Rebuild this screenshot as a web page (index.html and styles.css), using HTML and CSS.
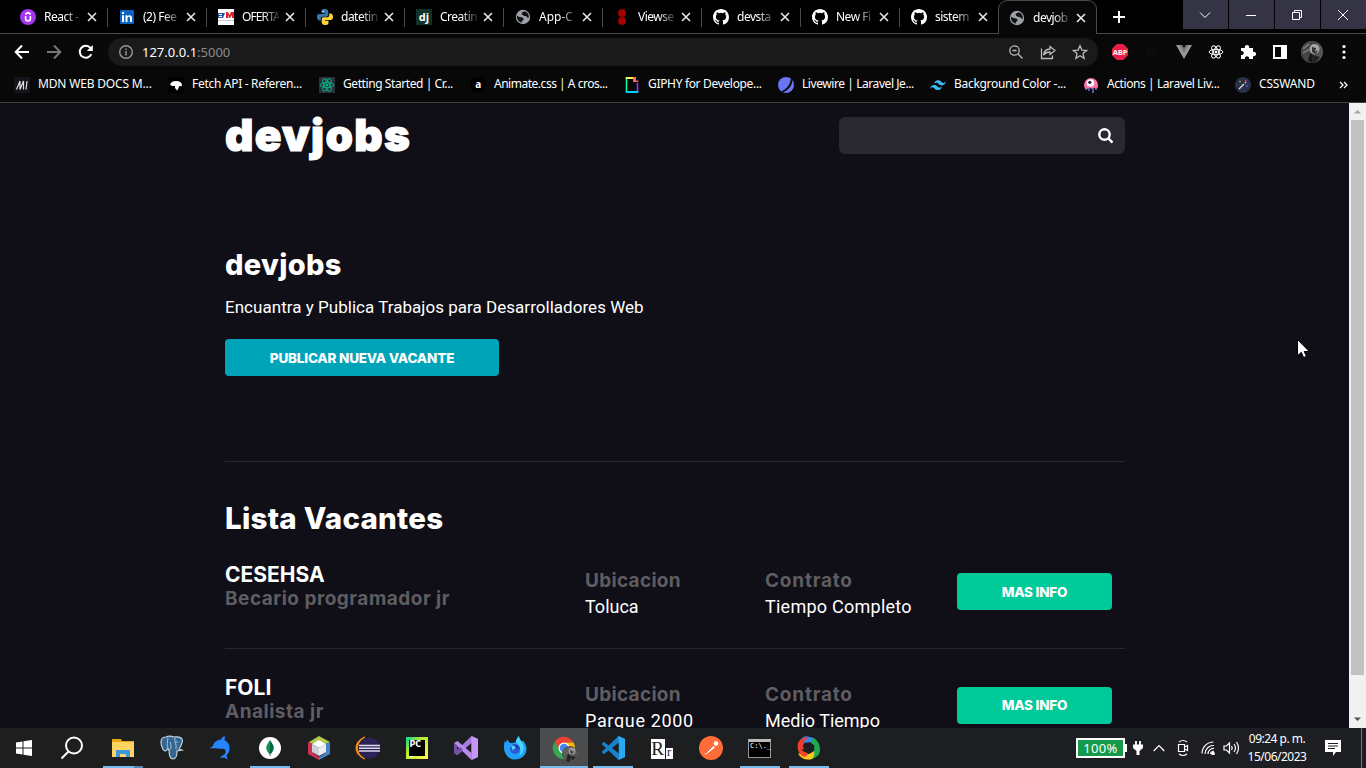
FILE: index.html
```html
<!DOCTYPE html>
<html lang="es">
<head>
<meta charset="utf-8">
<title>devjobs</title>
<link rel="stylesheet" href="styles.css">
</head>
<body>
<svg class="defs" width="0" height="0" aria-hidden="true">
  <symbol id="x" viewBox="0 0 10 10"><path d="M1 1l8 8M9 1L1 9" stroke="#e8e8e8" stroke-width="1.6" fill="none"/></symbol>
  <symbol id="github" viewBox="0 0 16 16"><path fill="#fff" d="M8 0C3.58 0 0 3.58 0 8c0 3.54 2.29 6.53 5.47 7.59.4.07.55-.17.55-.38 0-.19-.01-.82-.01-1.49-2.01.37-2.53-.49-2.69-.94-.09-.23-.48-.94-.82-1.13-.28-.15-.68-.52-.01-.53.63-.01 1.08.58 1.23.82.72 1.21 1.87.87 2.33.66.07-.52.28-.87.51-1.07-1.78-.2-3.64-.89-3.64-3.95 0-.87.31-1.59.82-2.15-.08-.2-.36-1.02.08-2.12 0 0 .67-.21 2.2.82a7.6 7.6 0 0 1 4 0c1.53-1.04 2.2-.82 2.2-.82.44 1.1.16 1.92.08 2.12.51.56.82 1.27.82 2.15 0 3.07-1.87 3.75-3.65 3.95.29.25.54.73.54 1.48 0 1.07-.01 1.93-.01 2.2 0 .21.15.46.55.38A8 8 0 0 0 16 8c0-4.42-3.58-8-8-8z"/></symbol>
  <symbol id="globe" viewBox="0 0 16 16"><circle cx="8" cy="8" r="7.200" fill="#9aa0a6"/><path d="M9.500 2.200L6.800 3.800v1.700L9.300 7h1.900l.8 1.500 1.800.2c.4-3-1.300-5.700-4.300-6.500zM2 6.800c-.5 3 1.400 6 4.800 7v-1.600l2-2-1.300-1.800L4.500 8z" fill="#101010"/></symbol>
  <symbol id="react" viewBox="0 0 16 16"><g fill="none" stroke="currentColor" stroke-width="1"><ellipse cx="8" cy="8" rx="6.800" ry="2.700"/><ellipse cx="8" cy="8" rx="6.800" ry="2.700" transform="rotate(60 8 8)"/><ellipse cx="8" cy="8" rx="6.800" ry="2.700" transform="rotate(120 8 8)"/></g><circle cx="8" cy="8" r="1.400" fill="currentColor"/></symbol>
</svg>

<div class="screen">
  <header class="tabs">
    <div class="tab"><svg class="fav" viewBox="0 0 16 16"><circle cx="8" cy="8" r="8" fill="#a435f0"/><path d="M5.600 7v2.600a2.400 2.400 0 0 0 4.800 0V7M5.300 5.200L8 3.500l2.700 1.700" fill="none" stroke="#fff" stroke-width="1.600"/></svg><span>React -</span><svg class="cl"><use href="#x"/></svg></div>
    <div class="tab"><svg class="fav" viewBox="0 0 16 16"><rect x="1" y="1" width="14" height="14" rx="1" fill="#0a66c2"/><path d="M3 6.300h2V13H3zM3 3h2v2H3zM6.500 6.300h2v1c1-1.800 4.500-1.500 4.500 1.500V13h-2V9.300c0-2-2.500-1.800-2.500 0V13h-2z" fill="#fff"/></svg><span>(2) Fee</span><svg class="cl"><use href="#x"/></svg></div>
    <div class="tab"><svg class="fav" viewBox="0 0 16 16"><rect width="16" height="16" fill="#fff"/><path d="M0 4h7l-2 5H0z" fill="#2151a5"/><path d="M1 5h3v1H1zM1 7h3v1H1z" fill="#fff"/><path d="M8 9V3h2l1.500 3L13 3h3v6h-2V6l-2 3h-1L10 6v3z" fill="#dc2531"/><path d="M0 11h16v1H0z" fill="#ccc"/></svg><span class="tight">OFERTA</span><svg class="cl"><use href="#x"/></svg></div>
    <div class="tab"><svg class="fav" viewBox="0 0 16 16"><path d="M8 0C4.500 0 4.500 1 4.500 3v1.200H8v.8H2.500C0 5 0 7 0 8.200s.7 3.300 2.600 3.300h1.200V9.600c0-1 .9-1.900 2-1.900h3.600c1 0 1.900-.9 1.900-1.900V3c0-2-1-3-3.300-3z" fill="#3776ab"/><path d="M8 16c3.500 0 3.500-1 3.500-3v-1.200H8V11h5.500C16 11 16 9 16 7.800s-.7-3.300-2.600-3.300h-1.200v1.900c0 1-.9 1.900-2 1.900H6.600c-1 0-1.900.9-1.900 1.900V13c0 2 1 3 3.300 3z" fill="#ffd43b"/><circle cx="6.300" cy="2.200" r=".8" fill="#fff"/></svg><span>datetin</span><svg class="cl"><use href="#x"/></svg></div>
    <div class="tab"><i class="fav dj">dj</i><span>Creatin</span><svg class="cl"><use href="#x"/></svg></div>
    <div class="tab"><svg class="fav"><use href="#globe"/></svg><span class="loose">App-C</span><svg class="cl"><use href="#x"/></svg></div>
    <div class="tab"><svg class="fav" viewBox="0 0 16 16"><circle cx="8" cy="4" r="4" fill="#a30000"/><circle cx="8" cy="12" r="4" fill="#a30000"/></svg><span>Viewse</span><svg class="cl"><use href="#x"/></svg></div>
    <div class="tab"><svg class="fav"><use href="#github"/></svg><span>devsta</span><svg class="cl"><use href="#x"/></svg></div>
    <div class="tab"><svg class="fav"><use href="#github"/></svg><span>New Fi</span><svg class="cl"><use href="#x"/></svg></div>
    <div class="tab last"><svg class="fav"><use href="#github"/></svg><span>sistem</span><svg class="cl"><use href="#x"/></svg></div>
    <div class="tab active"><svg class="fav"><use href="#globe"/></svg><span>devjob</span><svg class="cl"><use href="#x"/></svg></div>
    <svg class="plus" width="14" height="14" viewBox="0 0 14 14"><path d="M7 1v12M1 7h12" stroke="#fff" stroke-width="2"/></svg>
    <div class="winbtns">
      <b><svg viewBox="0 0 12 12"><path d="M1 3.500l5 5 5-5"/></svg></b>
      <b><svg viewBox="0 0 12 12"><path d="M1 6.500h10"/></svg></b>
      <b><svg viewBox="0 0 12 12"><path d="M1.500 3.500h7v7h-7zM3.500 3.500v-2h7v7h-2"/></svg></b>
      <b><svg viewBox="0 0 12 12"><path d="M1 1l10 10M11 1L1 11"/></svg></b>
    </div>
  </header>

  <div class="toolbar">
    <svg class="nav" viewBox="0 0 16 16"><path d="M15 8H2M8 1.500L1.700 8 8 14.500" stroke="#fff"/></svg>
    <svg class="nav" viewBox="0 0 16 16"><path d="M1 8h13M8 1.500L14.300 8 8 14.500" stroke="#777"/></svg>
    <svg class="nav" viewBox="0 0 16 16"><path d="M13.300 10.200A6 6 0 1 1 12.500 4" stroke="#fff"/><path d="M14.800 1v6H8.800z" fill="#fff" stroke="none"/></svg>
    <div class="omnibox">
      <svg class="info" viewBox="0 0 14 14"><circle cx="7" cy="7" r="6.300"/><path d="M7 6v4.500M7 3.500v1.500"/></svg>
      <div class="url">127.0.0.1<em>:5000</em></div>
      <svg class="oi" viewBox="0 0 16 16"><circle cx="6.500" cy="6.500" r="4.700"/><path d="M10 10l4.500 4.500M4.500 6.500h4"/></svg>
      <svg class="oi" viewBox="0 0 16 16"><path d="M1.500 4.500v10h11v-3M10 2.500l5 4-5 4V8c-3 0-5 1-6.500 3C4 7.500 6 5.300 10 5z"/></svg>
      <svg class="oi" viewBox="0 0 16 16"><path d="M8 1.700l1.900 4.400 4.700.4-3.600 3.100 1.100 4.700L8 11.800l-4.100 2.500L5 9.600 1.400 6.500l4.700-.4z"/></svg>
    </div>
    <div class="ext">
      <i class="abp">ABP</i>
      <i class="ghost">(•)</i>
      <svg viewBox="0 0 16 16"><path d="M0 1h6l2 3.500L10 1h6L8 15z" fill="#999"/><path d="M3.500 1H6l2 3.500L10 1h2.500L8 9z" fill="#777"/></svg>
      <svg class="rx"><use href="#react"/></svg>
      <svg viewBox="0 0 16 16"><path d="M1 4h4a2.200 2.200 0 1 1 4 0h4v4a2.200 2.200 0 1 1 0 4v3H9a2.100 2.100 0 1 0-4 0H1v-4a2.100 2.100 0 1 0 0-4z" fill="#fff"/></svg>
      <svg viewBox="0 0 16 16"><path d="M1 1h14v14H1z" fill="#fff"/><path d="M3 3h6v10H3z" fill="#080808"/></svg>
      <svg class="avatar" viewBox="0 0 22 22"><circle cx="11" cy="11" r="11" fill="#555"/><path d="M0 11A11 11 0 0 1 17 2L9 10l-1 11A11 11 0 0 1 0 11z" fill="#444"/><circle cx="13.500" cy="8" r="5" fill="#a5a5a5"/><path d="M11 6l4 1-1 4 3-2-2 4-4-2z" fill="#333"/><path d="M9 12l-2 8 4 2 1-8z" fill="#181818"/><path d="M12 14l7 2-4 5-4 1z" fill="#222"/><path d="M2 8l6-5M2 12l7-4" stroke="#777" stroke-width="2"/></svg>
      <svg class="dots" viewBox="0 0 4 16"><circle cx="2" cy="2.500" r="1.600"/><circle cx="2" cy="8" r="1.600"/><circle cx="2" cy="13.500" r="1.600"/></svg>
    </div>
  </div>

  <nav class="bookmarks">
    <a><svg viewBox="0 0 16 16"><rect width="16" height="16" fill="#15141a"/><path d="M2.500 12.500L6 4v8.500L9.500 4v8.500M13 4l-1 8.500" stroke="#ddd" stroke-width="1.200" fill="none"/></svg><span class="k1">MDN WEB DOCS M...</span></a>
    <a><svg viewBox="0 0 16 16"><rect width="16" height="16" fill="#000"/><path d="M2 7.500C3 5 5 4 8 4c4 0 6 1.500 6 4.500-1 1-2 1-3 .5 0 2-1 3-2 4.500L7 11V9H4z" fill="#fff"/></svg><span class="k2">Fetch API - Referen...</span></a>
    <a><svg viewBox="0 0 16 16" class="rg"><rect width="16" height="16" fill="#2b2f3b"/><use href="#react"/></svg><span class="k3">Getting Started | Cr...</span></a>
    <a><i class="an">a</i><span class="k4">Animate.css | A cros...</span></a>
    <a><svg viewBox="0 0 16 16"><path d="M2.500 1v14" stroke="#00ff99" stroke-width="1.600"/><path d="M1.700 1H9" stroke="#fff35c" stroke-width="2"/><path d="M13.500 6v9" stroke="#9933ff" stroke-width="1.600"/><path d="M1.700 15h12.600" stroke="#00ccff" stroke-width="2"/><path d="M9 0v5h5.300V3.500H12V0z" fill="#ff6666"/></svg><span class="k5">GIPHY for Develope...</span></a>
    <a><svg viewBox="0 0 16 16"><circle cx="8" cy="8" r="8" fill="#6875f5"/><path d="M3 14.500C9 12 12 8 13 1.500l1.500 1.500C14 9 10 13.500 4.500 15.500z" fill="#080808"/></svg><span class="k6">Livewire | Laravel Je...</span></a>
    <a><svg viewBox="0 0 16 16"><path d="M4 7c.6-2.500 2-3.800 4-3.800 3 0 3.500 2.300 5 2.700 1 .2 2-.2 3-1.300-.6 2.500-2 3.800-4 3.800-3 0-3.500-2.300-5-2.700-1-.2-2 .2-3 1.300zM0 11.700C.6 9.200 2 8 4 8c3 0 3.500 2.200 5 2.600 1 .2 2-.2 3-1.300-.6 2.600-2 3.800-4 3.800-3 0-3.500-2.300-5-2.700-1-.2-2 .2-3 1.300z" fill="#38bdf8"/></svg><span class="k7">Background Color -...</span></a>
    <a><svg viewBox="0 0 16 16"><path d="M3 9v4M6 10v4M10 10v6M13 9v4" stroke="#4e56a6" stroke-width="2"/><path d="M1 8a7 7 0 1 1 14 0c0 3-1 3.500-2 3.500S11 10 10 11s-2 1-3 0-2 1-3 1-3-1-3-4z" fill="#fb70a9"/><circle cx="7.500" cy="6" r="3.800" fill="#fff"/><circle cx="6.800" cy="5.300" r="1.600" fill="#1b1b45"/></svg><span class="k8">Actions | Laravel Liv...</span></a>
    <a><svg viewBox="0 0 16 16"><circle cx="8" cy="8" r="8" fill="#28304a"/><path d="M4 12l5-5" stroke="#ddd" stroke-width="1.200"/><path d="M10 6l1-1" stroke="#ffd65a" stroke-width="1.500"/><circle cx="5" cy="4.500" r=".8" fill="#e2ad43"/><circle cx="12" cy="9" r=".8" fill="#5f80f4"/><circle cx="11" cy="3.500" r=".8" fill="#e44a71"/></svg><span class="k9">CSSWAND</span></a>
    <svg class="more" viewBox="0 0 10 10"><path d="M1 2l3 3-3 3M5 2l3 3-3 3"/></svg>
  </nav>

  <main class="view">
    <div class="page">
      <div class="head">
        <h1>devjobs</h1>
        <div class="search"><svg viewBox="0 0 16 16"><circle cx="6.500" cy="6.500" r="5.200"/><path d="M10 10l4.500 4.700"/></svg></div>
      </div>
      <section class="hero">
        <h2>devjobs</h2>
        <p>Encuantra y Publica Trabajos para Desarrolladores Web</p>
        <a class="btn pub">PUBLICAR NUEVA VACANTE</a>
      </section>
      <section class="list">
        <h2 class="lista">Lista Vacantes</h2>
        <article>
          <div><h3>CESEHSA</h3><h4 class="role">Becario programador jr</h4></div>
          <div class="meta"><h4>Ubicacion</h4><p>Toluca</p></div>
          <div class="meta"><h4 class="co">Contrato</h4><p class="wide">Tiempo Completo</p></div>
          <a class="btn more-info">MAS INFO</a>
        </article>
        <article>
          <div><h3>FOLI</h3><h4 class="role">Analista jr</h4></div>
          <div class="meta"><h4>Ubicacion</h4><p class="wider">Parque 2000</p></div>
          <div class="meta"><h4 class="co">Contrato</h4><p>Medio Tiempo</p></div>
          <a class="btn more-info second">MAS INFO</a>
        </article>
      </section>
    </div>
    <div class="scroll">
      <svg viewBox="0 0 17 17"><path d="M5 10.500h7L8.500 7z" fill="#a3a3a3"/></svg>
      <div class="thumb"></div>
      <svg viewBox="0 0 17 17"><path d="M5 6.500h7L8.500 10z" fill="#505050"/></svg>
    </div>
    <svg class="cursor" width="13" height="20" viewBox="0 0 13 20"><path d="M.5.5v16.200l3.800-3.400 2.300 5.200 2.800-1.200-2.200-4.800h5z" fill="#fff" stroke="#000"/></svg>
  </main>

  <footer class="taskbar">
    <div class="cell sys"><svg viewBox="0 0 24 24"><path d="M4 6.500l6.500-1v6H4zM11.500 5.300L20 4v7.500h-8.500zM4 12.500h6.500v6L4 17.600zM11.500 12.500H20V20l-8.500-1.300z" fill="#fff"/></svg></div>
    <div class="cell sys gap"><svg viewBox="0 0 24 24"><circle cx="14" cy="9.500" r="8" fill="none" stroke="#fff" stroke-width="2"/><path d="M8.500 15.500L1.500 22.500" stroke="#fff" stroke-width="2"/></svg></div>
    <div class="cell open multi"><svg viewBox="0 0 24 24"><path d="M1 3h9l1 2h12v4H1z" fill="#e7a416"/><path d="M1 6h22v15H1z" fill="#ffd461"/><path d="M5 14h14v7h-4v-3H9v3H5z" fill="#3c97dd"/></svg></div>
    <div class="cell"><svg viewBox="0 0 24 24"><path d="M6 1C2 1 1 3 1 6s2 9 4 9 2-2 3-2l1 1c0 5 1 9 4 9s4-2 4-8l5-1-3-1c3-4 4-9 3-10-2-3-6-2-8-2-3-1-6-1-8 0z" fill="#336791" stroke="#c7d5df" stroke-width="1.200"/><path d="M8 2c-1 4-1 8 0 11M15 2c-1 4 2 6 1 11M9 14c3-1 2-5 1-8M16 6h2" fill="none" stroke="#c7d5df" stroke-width=".8"/></svg></div>
    <div class="cell"><svg viewBox="0 0 24 24"><path d="M1 12l3-2C5 6 8 4 12 3.500c1-2 2-3 4-3.500l-.5 4.200C19 6 21 9 20.500 13c0 3-1.500 5-3 6l1 4.500-3.500-2-4 .5c1-2 3-3 4.500-3.500 1.500-2 1.500-4 0-5.500-2-.5-5 0-7-.5-2-.5-5-.5-7.500 0z" fill="#2684ff"/></svg></div>
    <div class="cell open"><svg viewBox="0 0 24 24"><circle cx="12" cy="12" r="11" fill="#fff"/><path d="M12 4c-5 7-5 9 0 15z" fill="#12924f"/><path d="M12 4c5 7 5 9 0 15z" fill="#00684a"/><path d="M12 17v3" stroke="#777"/></svg></div>
    <div class="cell"><svg viewBox="0 0 24 24"><path d="M12 0l11 6-4 2-7-3-7 3-3-2z" fill="#b4c84c"/><path d="M1 6l5 2v9l6 4v3L1 18z" fill="#cf3156"/><path d="M23 6v12l-11 6v-3l6-4V8z" fill="#4283c8"/><path d="M5 8l7-4 7 4-7 4z" fill="#fff"/><path d="M5 8l7 4v8l-7-4z" fill="#cbd1d5"/><path d="M19 8l-7 4v8l7-4z" fill="#eee"/></svg></div>
    <div class="cell"><svg viewBox="0 0 24 24"><path d="M9 1C-3 5-3 19 9 23-1 17-1 7 9 1z" fill="#f78f1e" stroke="#f78f1e"/><circle cx="13.500" cy="12" r="10.500" fill="#2c2255"/><path d="M3 9.500h21M3 12.300h21M3 15h21" stroke="#ddd9ed" stroke-width="1.500"/></svg></div>
    <div class="cell"><i class="pc">PC<br>_</i></div>
    <div class="cell"><svg viewBox="0 0 24 24"><path d="M17.500 0L24 3v18l-6.500 3V7l-14 12L0 17l17.500-17z" fill="#a779e0"/><path d="M0 7l3.500-2L17.500 17v7L0 7z" fill="#b98af0"/><path d="M0 7l3 2v6l-3 2z" fill="#7450a8"/><path d="M3.500 19L9 13.500 6.500 11 0 17z" fill="#7450a8"/><path d="M17.500 0L24 3v18l-6.500 3z" fill="#c797f8"/></svg></div>
    <div class="cell"><svg viewBox="0 0 24 24"><path d="M1 10L1.500 5l1.500 1.500L4 3.500 7 7c2 0 4 0 6-1 0-2 1-4 3-6 0 3 2 4 3 6l1-1.500c2 3 3.500 5 3.500 8.500 0 6-5 10.500-11.500 10.500S.5 18 1 10z" fill="#1f9ff5"/><path d="M16 0c0 3 2 4 3 6 3 5 2 12-3 14 3-5 1-10-3-14 0-2 1-4 3-6z" fill="#45d5ff"/><circle cx="12" cy="13" r="5" fill="#2a5bd0"/><path d="M8 9l5 2c-1 2-3 2-3 4z" fill="#5bd8ff"/><path d="M12 9c3 0 4 2 4 4l-3-1z" fill="#193b9c"/></svg></div>
    <div class="cell open current"><svg viewBox="0 0 24 24"><path d="M2.500 6A11 11 0 0 1 21.500 6.500H12L7 14z" fill="#ea4335"/><path d="M2.500 6a11 11 0 0 0 8.500 17l5-8-8-1z" fill="#34a853"/><path d="M21.500 6.500A11 11 0 0 1 11 23l5-9-3-7.500z" fill="#fbbc04"/><circle cx="12" cy="12" r="5.500" fill="#fff"/><circle cx="12" cy="12" r="4.300" fill="#4285f4"/><circle cx="18" cy="18" r="8" fill="#555"/><circle cx="20" cy="15" r="3.500" fill="#999"/><path d="M18 14l4 2-3 2z" fill="#333"/><path d="M12 16l5-4M12 19l5-4" stroke="#777"/><path d="M16 18l-2 7 4 1 1-6zM19 20l5 1-4 4z" fill="#222"/></svg></div>
    <div class="cell open"><svg viewBox="0 0 24 24"><path fill-rule="evenodd" d="M17.500 0L24 3v18l-6.500 3L7.500 14.500 3 18l-2-1v-1.500L5 12 1 8.500V7l2-1 4.500 3.500zM11 12l7 5.500v-11z" fill="#1683ca"/><path d="M17.500 0L24 3v18l-6.500 3 .5-1z" fill="#29a8f4"/></svg></div>
    <div class="cell"><i class="rr"><b>R</b><u>r</u></i></div>
    <div class="cell"><svg viewBox="0 0 24 24"><circle cx="12" cy="12" r="12" fill="#ff6c37"/><path d="M5 19l9-9.500 2 2L9 17z" fill="#fff"/><circle cx="17" cy="7.500" r="2.300" fill="#fff"/><path d="M7 17l8-8" stroke="#d86544"/></svg></div>
    <div class="cell open"><i class="cmd">C:\._</i></div>
    <div class="cell open"><svg viewBox="0 0 24 24"><path d="M7 8C3 10 1 9 2 6c3-6 8-7 12-4-4 0-6 2-7 6z" fill="#3e83df"/><path d="M8 7c-1-4 1-6 4-6 6 0 10 5 10 10-3-4-8-6-14-4z" fill="#3e83df"/><path d="M14 7c0-4 2-5 4-4 6 5 6 11 3 17 0-6-2-10-7-13z" fill="#21a74c"/><path d="M17 10c5 1 7 4 5 8-3 4-7 6-11 5 5-3 7-7 6-13z" fill="#21a74c"/><path d="M17 15c1 5-1 8-4 8.500C8 24 3 22 1 17c6 3 11 2 16-2z" fill="#fec51e"/><path d="M11 17c-1 4-4 5-7 2-4-5-4-9-2-13 0 6 3 10 9 11z" fill="#f0472c"/><path d="M7 14C2 13 0 10 1 7c2-4 6-6 10-6-4 3-6 7-4 13z" fill="#ed3c31"/><circle cx="12" cy="12" r="4.800" fill="#1d1e20"/></svg></div>
    <div class="tray">
      <div class="batt">100%</div><i class="nub"></i>
      <svg class="plug" viewBox="0 0 10 16"><path d="M3 1v4M7 1v4" stroke="#fff" stroke-width="1.800"/><path d="M0 4.500h10V8L6.500 11v4h-3v-4L0 8z" fill="#fff"/></svg>
      <svg class="up" viewBox="0 0 12 8"><path d="M.7 7L6 1.500 11.300 7"/></svg>
      <svg class="cam" viewBox="0 0 12 18"><path d="M1.500 5.500h6v7h-6zM7.500 8l3-1.500v5l-3-1.500M2 3Q6 0 10 3M2 15q4 3 8 0"/></svg>
      <svg class="wifi" viewBox="0 0 14 14"><path d="M1 12.500A11.500 11.500 0 0 1 12.500 1M4 13a8.500 8.500 0 0 1 9-8.500M7 13a5.500 5.500 0 0 1 6-5.500M9.500 13a3 3 0 0 1 3.500-2.700"/><circle cx="12" cy="12.500" r="1.200" fill="#fff"/></svg>
      <svg class="vol" viewBox="0 0 17 14"><path d="M1 5h2.500L6.500 2v10L3.500 9H1zM8.500 5q1.300 2 0 4M11 3q3 4 0 8M13.500 1q4 6 0 12"/></svg>
      <div class="clock"><div>09:24 p. m.</div><div>15/06/2023</div></div>
      <svg class="note" viewBox="0 0 16 16"><path d="M0 0h16v12h-5l-3 4v-4H0z" fill="#fff"/><path d="M3 3.500h10M3 6h10M3 8.500h7" stroke="#1e1f23"/></svg>
      <i class="edge"></i>
    </div>
  </footer>
</div>
</body>
</html>
```
FILE: styles.css
```css
* { box-sizing: border-box; }
body { margin: 0; background: #000; color: #fff; font-family: "Noto Sans", "Open Sans", sans-serif; }
h1, h2, h3, h4, p { margin: 0; }
i, em { font-style: normal; }
svg { display: block; flex: none; }
.defs { position: absolute; }
.screen { width: 1366px; height: 768px; overflow: hidden; display: flex; flex-direction: column; }

/* tab strip */
.tabs { height: 34px; flex: none; display: flex; background: linear-gradient(#4a4a4a, #4a4a4a) 0 33px / 100% 1px no-repeat #000; padding-left: 9px; }
.tab { width: 99px; height: 34px; flex: none; display: flex; align-items: center; padding-left: 11px; background: linear-gradient(#4a4a4a, #4a4a4a) 98px 8px / 1px 19px no-repeat; }
.tab.last { background: none; width: 98px; }
.tab.active { width: 99px; padding-left: 10px; border: 1px solid #4a4a4a; border-bottom: 0; border-radius: 9px 9px 0 0; background: #080808; }
.fav { width: 16px; height: 16px; }
.tab span { width: 37px; margin-left: 8px; white-space: nowrap; font-size: 12px; letter-spacing: -.5px; line-height: 18px; -webkit-mask-image: linear-gradient(90deg, #000 55%, rgba(0, 0, 0, .15)); mask-image: linear-gradient(90deg, #000 55%, rgba(0, 0, 0, .15)); }
.tab .tight { letter-spacing: -.9px; }
.tab .loose { letter-spacing: 0; }
.cl { width: 10px; height: 10px; margin-left: 6px; }
.dj { background: #113228; font: bold 11px/15px "Open Sans", sans-serif; text-align: center; }
.plus { margin: 10px 0 0 15px; }
.winbtns { margin-left: auto; display: flex; gap: 1px; height: 29px; }
.winbtns b { width: 45px; background: #343445; display: grid; place-items: center; padding-right: 2px; }
.winbtns svg { width: 12px; height: 12px; fill: none; stroke: #fff; stroke-width: 1; }

/* toolbar */
.toolbar { height: 34px; flex: none; background: #080808; display: flex; align-items: center; padding: 2px 0 0 14px; }
.nav { width: 16px; height: 16px; margin-right: 16px; fill: none; stroke-width: 2; }
.omnibox { width: 990px; height: 28px; margin-left: -2px; border-radius: 14px; background: #1a1a1a; display: flex; align-items: center; padding: 0 10px 0 11px; }
.info { width: 14px; height: 14px; fill: none; stroke: #999; stroke-width: 1.4; }
.url { margin: 0 auto 0 9px; font-size: 13px; line-height: 18px; }
.url em { color: #8a8a8a; }
.oi { width: 16px; height: 16px; margin-left: 16px; fill: none; stroke: #bbb; stroke-width: 1.3; }
.ext { display: flex; align-items: center; gap: 16px; margin-left: 14px; }
.ext svg { width: 16px; height: 16px; }
.ext .abp { width: 16px; height: 16px; background: #ed1e45; clip-path: polygon(30% 0, 70% 0, 100% 30%, 100% 70%, 70% 100%, 30% 100%, 0 70%, 0 30%); font: bold 7.5px/16px "Open Sans", sans-serif; letter-spacing: -.2px; text-align: center; }
.ext .ghost { width: 16px; color: #1a1a1a; font-size: 8px; text-align: center; }
.ext .avatar { width: 22px; height: 22px; margin: 0 -3px; }
.ext .dots { width: 4px; margin-left: 6px; fill: #fff; }

/* bookmarks */
.bookmarks { height: 35px; flex: none; background: #080808; border-bottom: 1px solid #424242; display: grid; grid-template-columns: 154px 151px 151px 154px 154px 152px 153px 152px 104px 10px; align-items: center; padding: 0 0 1px 14px; }
.bookmarks a { display: flex; align-items: center; gap: 8px; white-space: nowrap; font-size: 12px; line-height: 18px; letter-spacing: -.3px; }
.bookmarks a svg, .an { width: 16px; height: 16px; flex: none; }
.bookmarks span { margin-top: -1px; }
.rg { color: #09ae80; }
.an { font: bold 10px/14px "Open Sans", sans-serif; text-align: center; clip-path: circle(50%); background: #000; }
.more { width: 10px; height: 10px; fill: none; stroke: #fff; stroke-width: 1.3; }
.bookmarks .k1 { letter-spacing: -.17px; }
.bookmarks .k3, .bookmarks .k8 { letter-spacing: -.42px; }
.bookmarks .k4 { letter-spacing: -.48px; }
.bookmarks .k5 { letter-spacing: -.33px; }
.bookmarks .k6 { letter-spacing: -.43px; }
.bookmarks .k9 { letter-spacing: -.15px; }

/* page */
.view { height: 625px; flex: none; background: #100e17; display: flex; position: relative; overflow: hidden; }
.page { width: 1349px; padding: 0 224px 0 225px; font-family: Roboto, sans-serif; }
.head { display: flex; justify-content: space-between; height: 66px; }
h1, h2, h3, h4, .btn { font-family: Inter, Roboto, sans-serif; font-weight: 700; white-space: nowrap; }
h1 { font-size: 44px; font-weight: 900; line-height: 64px; letter-spacing: 1.300px; -webkit-text-stroke: 1.2px #fff; }
.search { width: 286px; height: 37px; margin-top: 14px; border-radius: 6px; background: #29272f; display: flex; align-items: center; justify-content: flex-end; padding-right: 11px; }
.search svg { width: 16px; height: 16px; fill: none; stroke: #fff; stroke-width: 2.4; }
.hero { height: 293px; padding-top: 78px; border-bottom: 1px solid #28272b; }
h2 { font-size: 29px; line-height: 36px; }
.hero h2 { font-weight: 800; letter-spacing: .3px; }
.hero p { font-size: 17px; line-height: 20px; margin: 14px 0 22px; white-space: nowrap; letter-spacing: .03px; }
.btn { display: flex; align-items: center; justify-content: center; height: 37px; border-radius: 4px; font-size: 13.500px; font-weight: 800; letter-spacing: -.2px; }
.pub { width: 274px; background: #00a4b8; }
.list { padding-top: 38px; }
.lista { margin-bottom: 26px; font-size: 29.500px; font-weight: 800; letter-spacing: .25px; }
article { height: 87px; display: grid; grid-template-columns: 360px 180px 192px 155px; align-items: start; border-bottom: 1px solid #28272b; margin-bottom: 27px; }
h3 { font-size: 21px; line-height: 24px; padding-top: 1px; }
article + article h3 { padding-top: 0; }
h4 { font-size: 19px; line-height: 24px; color: #5e5d62; font-weight: 700; letter-spacing: .3px; }
.role { letter-spacing: .5px; }
.co { letter-spacing: .8px; }
.meta { padding-top: 7px; }
.meta p { font-size: 18px; line-height: 26px; margin-top: 1px; white-space: nowrap; }
.meta .wide { letter-spacing: .25px; }
.meta .wider { letter-spacing: .65px; }
.more-info { margin-top: 11px; background: #00ca99; }
.second { padding-bottom: 1px; }
.scroll { width: 17px; background: #f1f1f1; display: flex; flex-direction: column; justify-content: space-between; }
.scroll svg { width: 17px; height: 17px; }
.thumb { width: 13px; height: 555px; margin: 0 2px auto; background: #c1c1c1; }
.cursor { position: absolute; left: 1297px; top: 236px; }

/* taskbar */
.taskbar { height: 40px; flex: none; display: flex; background: linear-gradient(90deg, #1e1e1e, #1c1e20 60%, #1e1f24); }
.cell { width: 49px; height: 40px; flex: none; display: flex; align-items: center; justify-content: center; }
.cell svg { width: 24px; height: 24px; overflow: visible; }
.sys { width: 48px; }
.gap { margin-right: 2px; }
.open { background: linear-gradient(#76b9ed, #76b9ed) 5px 38px / 40px 2px no-repeat; }
.multi { background: linear-gradient(90deg, #76b9ed 31px, #5585ab 31px) 5px 38px / 40px 2px no-repeat; }
.current { background: linear-gradient(#4b4c4d 38px, #76b9ed 38px) 1px 0 / 48px 40px no-repeat; }
.pc { width: 22px; height: 22px; border: 3px solid; border-image: linear-gradient(135deg, #21d789, #b9f02d 40%, #fcf84a) 1; background: #000; font: bold 8px/8px "DejaVu Sans", sans-serif; padding: 1px 0 0 1px; }
.rr { display: flex; align-items: flex-end; width: 22px; height: 21px; }
.rr b, .rr u { background: #fff; color: #222; font-family: "Liberation Serif", serif; text-decoration: none; text-align: center; }
.rr b { width: 14px; height: 20px; margin-right: 1px; font-size: 19px; line-height: 20px; font-weight: 400; }
.rr u { width: 7px; height: 11px; font-size: 12px; line-height: 9px; }
.cmd { width: 23px; height: 19px; background: #000; border: 1px solid #999; border-top: 3px solid #bbb; font: 7px/8px "DejaVu Sans Mono", monospace; padding-left: 1px; }
.tray { margin-left: auto; display: flex; align-items: center; width: 290px; }
.tray svg { fill: none; stroke: #fff; stroke-width: 1.2; }
.batt { width: 49px; height: 20px; border: 2px solid #fff; background: #159a4b; font-size: 13px; line-height: 16px; text-align: center; letter-spacing: .3px; }
.nub { width: 2px; height: 8px; background: #fff; }
.tray .plug { width: 10px; height: 16px; margin-left: 6px; stroke: none; }
.up { width: 12px; height: 8px; margin-left: 10px; }
.cam { width: 12px; height: 18px; margin-left: 12px; }
.wifi { width: 14px; height: 14px; margin-left: 12px; }
.vol { width: 17px; height: 14px; margin-left: 8px; }
.clock { width: 60px; margin-left: 7px; font-size: 12px; line-height: 18px; text-align: center; white-space: nowrap; letter-spacing: -.5px; }
.tray .note { width: 16px; height: 16px; margin-left: 18px; stroke: none; }
.edge { width: 1px; height: 40px; margin-left: 20px; background: #77797c; }
```
